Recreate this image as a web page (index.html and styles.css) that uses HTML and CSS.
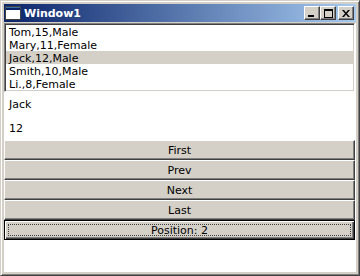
FILE: index.html
```
<!DOCTYPE html>
<html lang="en">
<head>
    <meta charset="UTF-8">
    <link rel="stylesheet" href="styles.css">
    <title>Window1</title>
</head>
<body>

    <div class="window">
        <div class="titlebar">
            <svg class="app-icon" width="16" height="16" viewBox="0 0 16 16">
                <rect x="0.5" y="1.5" width="15" height="13" fill="#ffffff" stroke="#404040"/>
                <rect x="1" y="2" width="14" height="3" fill="#0a246a"/>
                <rect x="1" y="2" width="14" height="1" fill="#3a6ea5"/>
            </svg>
            <span class="title">Window1</span>
            <div class="caption-buttons">
                <span class="cap-btn">
                    <svg width="8" height="7" viewBox="0 0 8 7"><rect x="0" y="5" width="6" height="2" fill="#000"/></svg>
                </span>
                <span class="cap-btn">
                    <svg width="9" height="9" viewBox="0 0 9 9"><rect x="0.5" y="0.5" width="8" height="8" fill="none" stroke="#000"/><rect x="0" y="1" width="9" height="1" fill="#000"/></svg>
                </span>
                <span class="cap-btn close">
                    <svg width="8" height="7" viewBox="0 0 8 7"><path d="M0 0h2l2 2.5l2-2.5h2l-3 3.5l3 3.5h-2l-2-2.5l-2 2.5h-2l3-3.5z" fill="#000"/></svg>
                </span>
            </div>
        </div>

        <div class="client">
            <ul class="listbox">
                <li>Tom,15,Male</li>
                <li>Mary,11,Female</li>
                <li class="selected">Jack,12,Male</li>
                <li>Smith,10,Male</li>
                <li>Li.,8,Female</li>
            </ul>

            <div class="label">Jack</div>
            <div class="label">12</div>

            <button class="btn">First</button>
            <button class="btn">Prev</button>
            <button class="btn">Next</button>
            <button class="btn">Last</button>
            <button class="btn default"><span class="focus">Position: 2</span></button>
        </div>
    </div>

</body>
</html>
```

FILE: styles.css
```
body {
    margin: 0;
    font-family: "DejaVu Sans", sans-serif;
    font-size: 11px;
}

.window {
    width: 360px;
    height: 276px;
    box-sizing: border-box;
    display: flex;
    flex-direction: column;
    padding: 2px;
    background-color: #d4d0c8;
    border: 1px solid;
    border-color: #d4d0c8 #404040 #404040 #d4d0c8;
    box-shadow: inset 1px 1px #ffffff, inset -1px -1px #808080;
}

.titlebar {
    height: 18px;
    margin: 1px 1px 1px 1px;
    display: flex;
    align-items: center;
    background: linear-gradient(to right, #0a246a, #a6caf0);
    color: #ffffff;
}

.app-icon {
    margin-left: 1px;
    margin-right: 3px;
}

.title {
    font-weight: bold;
}

.caption-buttons {
    margin-left: auto;
    margin-right: 2px;
    display: flex;
}

.cap-btn {
    width: 16px;
    height: 14px;
    box-sizing: border-box;
    display: flex;
    align-items: center;
    justify-content: center;
    background-color: #d4d0c8;
    border: 1px solid;
    border-color: #ffffff #404040 #404040 #ffffff;
    box-shadow: inset -1px -1px #808080;
}

.cap-btn.close {
    margin-left: 2px;
}

.client {
    flex: 1;
    margin: 0 1px 1px 1px;
    background-color: #ffffff;
    display: flex;
    flex-direction: column;
}

.listbox {
    list-style: none;
    margin: 0 1px 0 0;
    padding: 1px 0;
    border: 1px solid;
    border-color: #808080 #ffffff #ffffff #808080;
    box-shadow: inset 1px 1px #404040, inset -1px -1px #d4d0c8;
}

.listbox li {
    height: 13px;
    line-height: 15px;
    padding-left: 3px;
    margin: 0 1px;
    overflow: hidden;
}

.listbox li.selected {
    background-color: #d4d0c8;
}

.label {
    height: 24px;
    line-height: 16px;
    padding: 5px;
    box-sizing: border-box;
}

.btn {
    height: 20px;
    margin: 0 1px 0 0;
    padding: 0;
    font: inherit;
    color: #000000;
    background-color: #d4d0c8;
    border: 1px solid;
    border-color: #ffffff #404040 #404040 #ffffff;
    box-shadow: inset -1px -1px #808080;
}

.btn.default {
    border: 1px solid #000000;
    box-shadow: inset 1px 1px #ffffff, inset -1px -1px #404040, inset -2px -2px #808080;
    padding: 3px;
    display: flex;
}

.btn.default .focus {
    flex: 1;
    border: 1px dotted #404040;
    line-height: 11px;
}
```
